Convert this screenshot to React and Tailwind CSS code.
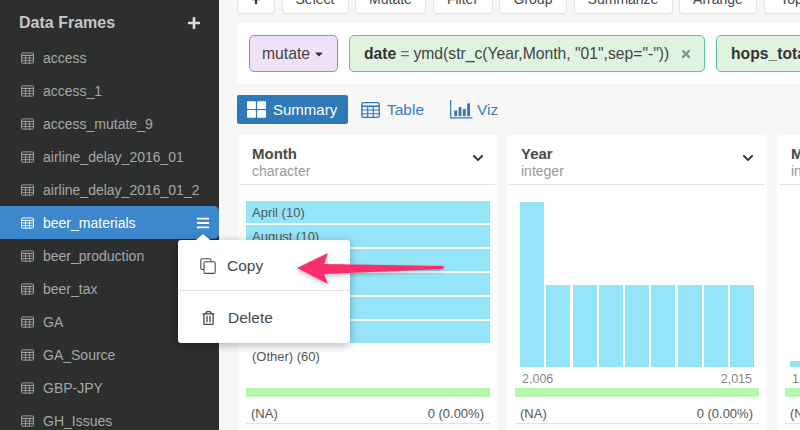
import React from "react";
import { FaPlus, FaBars, FaTimes, FaChevronDown, FaThLarge, FaRegTrashAlt, FaCaretDown } from "react-icons/fa";

const FONT = { fontFamily: '"Liberation Sans", Arial, sans-serif' };

function GridIcon({ className }) {
  return (
    <svg viewBox="0 0 14 12" className={className} fill="none" stroke="currentColor" strokeWidth="1">
      <rect x="0.5" y="0.5" width="13" height="11" rx="1.2" />
      <path d="M0.5 3.2H13.5" strokeWidth="1.2" />
      <path d="M0 6H14M0 8.8H14M4.9 3V12M9.1 3V12" strokeWidth="0.9" />
    </svg>
  );
}

function CopyIcon({ className }) {
  return (
    <svg viewBox="0 0 16 16" className={className} fill="none" stroke="currentColor" strokeWidth="1.1">
      <path d="M4 11.5H2.2Q0.8 11.5 0.8 10.1V2.2Q0.8 0.8 2.2 0.8H9.6Q11 0.8 11 2.2V3.8" />
      <rect x="4" y="3.8" width="11.2" height="11.6" rx="1.4" />
    </svg>
  );
}

function VizIcon({ className }) {
  return (
    <svg viewBox="0 0 24 20" className={className} fill="currentColor">
      <path d="M0.5 0V19.5H24V18.2H1.8V0Z" />
      <rect x="5" y="11" width="3" height="6" />
      <rect x="9.5" y="7.5" width="3" height="9.5" />
      <rect x="14" y="9.5" width="3" height="7.5" />
      <rect x="18.5" y="3.5" width="3" height="13.5" />
    </svg>
  );
}

const FRAMES = ["access", "access_1", "access_mutate_9", "airline_delay_2016_01", "airline_delay_2016_01_2", "beer_materials", "beer_production", "beer_tax", "GA", "GA_Source", "GBP-JPY", "GH_Issues"];
const TOOLS = [["+", 38], ["Select", 67], ["Mutate", 71], ["Filter", 60], ["Group", 68], ["Summarize", 99], ["Arrange", 78], ["Top N", 70]];
const MONTHS = ["April (10)", "August (10)", "December (10)", "February (10)", "January (10)", "July (10)"];
const YEAR = [165, 82, 82, 82, 82, 82, 82, 82, 82];

function Sidebar() {
  return (
    <aside className="w-[219px] shrink-0 bg-[#2d2f2f] h-full overflow-hidden">
      <div className="flex items-center justify-between h-[46px] pl-[19px] pr-[18px]">
        <span className="text-[16px] font-bold text-[#c6c6c6]">Data Frames</span>
        <FaPlus className="text-[#dcdcdc] w-[14px] h-[14px]" />
      </div>
      <ul className="-mt-[5px]">
        {FRAMES.map((f) => {
          const on = f === "beer_materials";
          return (
            <li
              key={f}
              className={`flex items-center h-[33px] pl-[21px] pr-[8px] text-[14px] ${on ? "bg-[#3d87cd] text-white rounded-r-[5px]" : "text-[#a6a6a6]"}`}
            >
              <GridIcon className="w-[13px] h-[12px] mr-[9px] shrink-0" />
              <span className="flex-1 pt-[1px]">{f}</span>
              {on && <FaBars className="w-[14px] h-[14px] mr-[1px]" />}
            </li>
          );
        })}
      </ul>
    </aside>
  );
}

function Toolbar() {
  return (
    <div className="flex gap-[6.5px] -mt-[16px] h-[30px] whitespace-nowrap">
      {TOOLS.map(([t, w]) => (
        <div
          key={t}
          style={{ width: w }}
          className="h-[30px] shrink-0 bg-white border border-[#e6e6e6] rounded-[4px] flex items-center justify-center text-[14px] text-[#444] shadow-[0_1px_1px_rgba(0,0,0,0.04)]"
        >
          {t === "+" ? <FaPlus className="w-[12px] h-[12px] text-[#333]" /> : t}
        </div>
      ))}
    </div>
  );
}

function Steps() {
  return (
    <div className="mt-[9px] h-[61px] bg-white flex items-center gap-[11px] pl-[12px] whitespace-nowrap">
      <div className="w-[89px] h-[37px] shrink-0 rounded-[5px] bg-[#efe2f8] border border-[#ab7fc1] flex items-center justify-center gap-[3px] text-[15.7px] text-[#444]">
        mutate <FaCaretDown className="w-[12px] h-[12px] text-[#333]" />
      </div>
      <div className="w-[356px] h-[37px] shrink-0 rounded-[5px] bg-[#dff3e0] border border-[#55c79b] flex items-center pl-[14px] text-[15.7px] text-[#444]">
        <b className="text-[#333]">date</b>
        <span className="ml-[4px] text-[#666]">=</span>
        <span className="ml-[4px]">ymd(str_c(Year,Month, "01",sep="-"))</span>
        <FaTimes className="ml-[11px] w-[12px] h-[12px] text-[#85938a]" />
      </div>
      <div className="w-[200px] h-[37px] shrink-0 rounded-[5px] bg-[#dff3e0] border border-[#55c79b] flex items-center pl-[14px] text-[15.7px] text-[#333]">
        <b>hops_total</b>
      </div>
    </div>
  );
}

function Tabs() {
  return (
    <div className="mt-[11px] flex items-center h-[29px] text-[15.5px] text-[#3a7fbd]">
      <div className="w-[111px] h-[29px] bg-[#2f79b9] rounded-[2px] text-white flex items-center pl-[10px] gap-[7px]">
        <FaThLarge className="w-[19px] h-[19px]" />
        <span className="text-[15px] pt-[1px]">Summary</span>
      </div>
      <GridIcon className="w-[19px] h-[16px] ml-[13px] mr-[7px] text-[#2f79b9]" />
      <span className="pt-[1px]">Table</span>
      <VizIcon className="w-[24px] h-[19px] ml-[25px] mr-[4px] text-[#2f79b9]" />
      <span className="pt-[1px]">Viz</span>
    </div>
  );
}

function Card({ title, type, className, children, right }) {
  return (
    <div className={`h-[300px] shrink-0 bg-white rounded-t-[3px] px-[2px] ${className}`}>
      <div className="h-[50px] border-b border-[#e2e2e2] pl-[12px] pr-[11px] pt-[10px] flex justify-between">
        <div>
          <div className="text-[15px] leading-[17px] font-bold text-[#4a4a4a]">{title}</div>
          <div className="text-[14px] leading-[18px] text-[#999]">{type}</div>
        </div>
        {right && <FaChevronDown className="w-[12px] h-[12px] mt-[7px] text-[#333]" />}
      </div>
      {children}
    </div>
  );
}

function NaFooter() {
  return (
    <>
      <div className="mx-[6px] h-[9px] bg-[#b4f7ad]" />
      <div className="mx-[6px] h-[27px] pt-[7px] border-b border-[#e2e2e2] flex items-center justify-between pl-[5px] pr-[6px] text-[13px] text-[#555]">
        <span>(NA)</span>
        <span>0 (0.00%)</span>
      </div>
    </>
  );
}

function Cards() {
  return (
    <div className="mt-[11px] flex gap-[10px] pl-[1px]">
      <Card title="Month" type="character" className="w-[259px]" right>
        <div className="pt-[16px] pl-[6px] pr-[5px] flex flex-col gap-[2px] h-[203px]">
          {MONTHS.map((m) => (
            <div key={m} className="h-[22px] shrink-0 bg-[#96e4f8] pl-[6px] text-[13px] leading-[23px] text-[#555]">{m}</div>
          ))}
          <div className="pl-[6px] h-[22px] text-[13px] leading-[24px] text-[#555]">(Other) (60)</div>
        </div>
        <div className="-mr-[1px]">
          <NaFooter />
        </div>
      </Card>
      <Card title="Year" type="integer" className="w-[260px]" right>
        <div className="h-[203px] px-[6px] relative">
          <div className="h-[182px] pl-[5px] pr-[5px] flex items-end gap-[2.2px]">
            {YEAR.map((h, i) => (
              <div key={i} style={{ height: h }} className="flex-1 bg-[#96e4f8]" />
            ))}
          </div>
          <div className="flex justify-between px-[7px] pt-[2px] text-[12.5px] leading-[20px] text-[#888]">
            <span>2,006</span>
            <span>2,015</span>
          </div>
        </div>
        <NaFooter />
      </Card>
      <Card title="Month" type="integer" className="w-[260px]">
        <div className="h-[203px] px-[6px]">
          <div className="h-[182px] pl-[5px] flex items-end">
            <div className="w-[24px] h-[6px] bg-[#96e4f8]" />
          </div>
          <div className="px-[7px] pt-[2px] text-[12.5px] leading-[20px] text-[#888]">1</div>
        </div>
        <NaFooter />
      </Card>
    </div>
  );
}

function Menu() {
  return (
    <div className="absolute left-[178px] top-[240px] w-[172px] h-[103px] bg-white rounded-[3px] shadow-[0_2px_10px_rgba(0,0,0,0.3)] text-[#4a4a4a]">
      <div className="absolute -top-[6px] left-[18px] w-0 h-0 border-x-[7px] border-x-transparent border-b-[6px] border-b-white" />
      <div className="h-[51px] pt-[2px] border-b border-[#e0e0e0] flex items-center pl-[22px] text-[15.5px] gap-[11px]">
        <CopyIcon className="w-[16px] h-[16px]" />
        Copy
      </div>
      <div className="h-[52px] pt-[2px] flex items-center pl-[24px] text-[15.5px] gap-[13px]">
        <FaRegTrashAlt className="w-[13px] h-[14px]" />
        Delete
      </div>
    </div>
  );
}

function Arrow() {
  return (
    <svg className="absolute left-[290px] top-[248px] drop-shadow-[0_2px_2px_rgba(0,0,0,0.25)]" width="160" height="42" viewBox="0 0 160 42">
      <path d="M7 20 L38 5 L34 16 L153 18 Q155 19.5 153 21 L34 26 L38 36 Z" fill="#fd2c6b" />
    </svg>
  );
}

export default function App() {
  return (
    <div style={FONT} className="relative flex w-[800px] h-[430px] overflow-hidden">
      <Sidebar />
      <main className="flex-1 min-w-0 h-full overflow-hidden bg-[#f7f7f7] pl-[18px]">
        <Toolbar />
        <Steps />
        <Tabs />
        <Cards />
      </main>
      <Menu />
      <Arrow />
    </div>
  );
}
